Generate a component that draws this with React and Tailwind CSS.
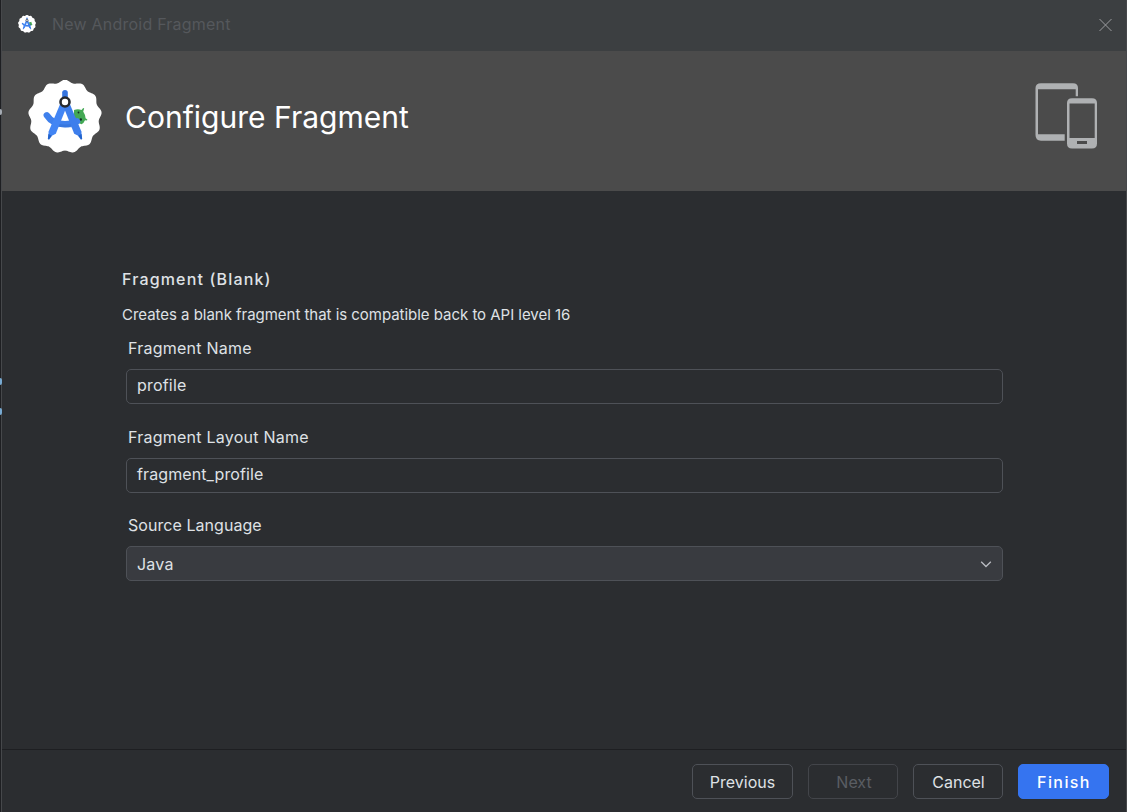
const BADGE_LOBES = 13;

const badgePoints = Array.from({ length: 260 }, (_, i) => {
  const angle = (i / 260) * Math.PI * 2;
  const radius = 35.4 + 1.4 * Math.cos(BADGE_LOBES * angle);
  return `${(37 + radius * Math.sin(angle)).toFixed(2)},${(36.6 - radius * Math.cos(angle)).toFixed(2)}`;
}).join(" ");

function StudioLogo({ className }) {
  return (
    <svg className={className} viewBox="0 0 74 74" fill="none">
      <polygon fill="#fff" points={badgePoints} />
      <path d="M46 30Q50 28.300 53.500 30L55.200 27.900L56.200 28.500L55.200 31.500Q57.500 35 57.600 38.200L59.400 39.500L59 40.600L57 40.300Q56 43 53.500 44.300L46 41Z" fill="#43a854" />
      <circle cx="50.500" cy="32.500" r=".9" fill="#102a25" />
      <circle cx="52.800" cy="39.500" r="1.200" fill="#102a25" />
      <path d="M18.800 35.300Q24.500 44.300 37 44.300Q44 44.300 49 41.300" stroke="#3f80ec" strokeWidth="6.400" strokeLinecap="round" />
      <path d="M30 43.700Q37 45.100 44 43.700V47.400Q37 48 28 46.500Z" fill="#2b68c9" opacity=".35" />
      <path d="M34.200 12.500Q34.200 10 37 10Q39.800 10 39.800 12.500V20H34.200Z" fill="#3474df" />
      <path d="M33 22L20.600 51.500L20.300 57.500L27.800 53.700L38.500 27Z" fill="#4285f4" />
      <path d="M41 22L53.400 51.500L53.700 57.500L46.200 53.700L36 28Z" fill="#3d7eec" />
      <path d="M20.400 54L24 55.700L21 59.700L19.800 59ZM53.600 54L50 55.700L53 59.700L54.200 59Z" fill="#2263cc" />
      <circle cx="37" cy="22" r="4.500" fill="#fff" stroke="#25292e" strokeWidth="2.600" />
    </svg>
  );
}

function DevicesIcon() {
  return (
    <svg className="h-[68px] w-[64px]" viewBox="0 0 64 68">
      <path
        fill="#afb1b3"
        fillRule="evenodd"
        d="M6 1.300H38Q43 1.300 43 6V14.300H40.700V7.300H3V52.300H29.700V58.700H6Q.5 58.700 .5 53V6Q.5 1.300 6 1.300Z"
      />
      <path
        fill="#afb1b3"
        fillRule="evenodd"
        d="M37 16.300H57Q62 16.300 62 21V61.500Q62 66.500 57 66.500H37Q32 66.500 32 61.500V21Q32 16.300 37 16.300ZM34.500 21.500V56H59.700V21.500ZM42 59V62H52V59Z"
      />
    </svg>
  );
}

function Field({ label, labelTracking = "tracking-[0.24px]", valueTracking = "tracking-[0.2px]", value, select, className }) {
  return (
    <div className={className}>
      <div className={"ml-[2px] h-[31px] text-[16px] leading-5 " + labelTracking}>{label}</div>
      <div
        className={
          "flex h-[35px] items-center justify-between rounded-[5px] border border-[#4e5157] pr-[10px] pl-[10px] text-[16px] " +
          valueTracking +
          (select ? " bg-[#393b40] pt-px" : " bg-[#2b2d30] pb-[3px]")
        }
      >
        <span>{value}</span>
        {select && (
          <svg className="h-3 w-3" viewBox="0 0 12 12" fill="none" stroke="#b9bbc1" strokeWidth="1.300">
            <path d="M1.200 3.700L6 8.500L10.800 3.700" />
          </svg>
        )}
      </div>
    </div>
  );
}

function Button({ children, className }) {
  return <button className={"flex h-[35px] items-center justify-center rounded-[5px] border text-[16px] " + className}>{children}</button>;
}

export default function App() {
  return (
    <div className="relative flex h-[812px] w-[1127px] overflow-hidden bg-[#2b2d30] font-['Inter',sans-serif] text-[#dfe1e5]">
      <div className="w-px shrink-0 bg-[#1e1f22]" />
      <div className="flex w-[1126px] shrink-0 flex-col border-x border-[#46484b]">
        <header className="flex h-[51px] items-center bg-[#3c3f41] pr-[14px] pl-[16px]">
          <StudioLogo className="-mt-[3px] h-[18px] w-[18px]" />
          <span className="-mt-[3px] ml-4 text-[16px] tracking-[0.22px] text-[#55585c]">New Android Fragment</span>
          <svg className="-mt-px ml-auto h-[13px] w-[13px]" viewBox="0 0 13 13" stroke="#9b9da0" strokeWidth="1">
            <path d="M.5 0L12.500 12M12.500 0L.5 12" />
          </svg>
        </header>
        <section className="flex h-[140px] items-center bg-[#4b4b4b] pr-[27px] pl-[26px]">
          <StudioLogo className="-mt-[9px] h-[74px] w-[74px]" />
          <h1 className="-mt-[8px] ml-[23px] text-[30px] font-normal tracking-[0.02px] text-white">Configure Fragment</h1>
          <div className="-mt-[10px] ml-auto">
            <DevicesIcon />
          </div>
        </section>
        <main className="h-[558px] pt-[78px] pl-[120px]">
          <h2 className="h-[36px] text-[16px] leading-5 font-medium tracking-[1.15px]">Fragment (Blank)</h2>
          <p className="h-[33px] text-[15px] leading-5 tracking-[-0.03px]">Creates a blank fragment that is compatible back to API level 16</p>
          <div className="ml-1 w-[877px]">
            <Field label="Fragment Name" value="profile" />
            <Field className="mt-[23px]" label="Fragment Layout Name" value="fragment_profile" valueTracking="tracking-[0.1px]" />
            <Field className="mt-[22px]" label="Source Language" labelTracking="tracking-[0.05px]" value="Java" select />
          </div>
        </main>
        <footer className="flex h-[63px] justify-end gap-[15px] border-t border-[#1e1f22] pt-[14px] pr-[17px]">
          <Button className="w-[101px] border-[#4e5157]">Previous</Button>
          <Button className="w-[90px] border-[#43454a] pl-[2px] text-[#5a5d63]">Next</Button>
          <Button className="w-[90px] border-[#4e5157] pl-px">Cancel</Button>
          <Button className="w-[91px] border-[#3574f0] bg-[#3574f0] pl-px font-medium tracking-[1.400px] text-white">Finish</Button>
        </footer>
      </div>
      <i className="absolute top-[109px] left-0 h-[6px] w-[2px] rounded-r bg-[#a5abb3]" />
      <i className="absolute top-[378px] left-0 h-[7px] w-[2px] rounded-r bg-[#77a9d1]" />
      <i className="absolute top-[408px] left-0 h-[7px] w-[2px] rounded-r bg-[#77a9d1]" />
    </div>
  );
}
